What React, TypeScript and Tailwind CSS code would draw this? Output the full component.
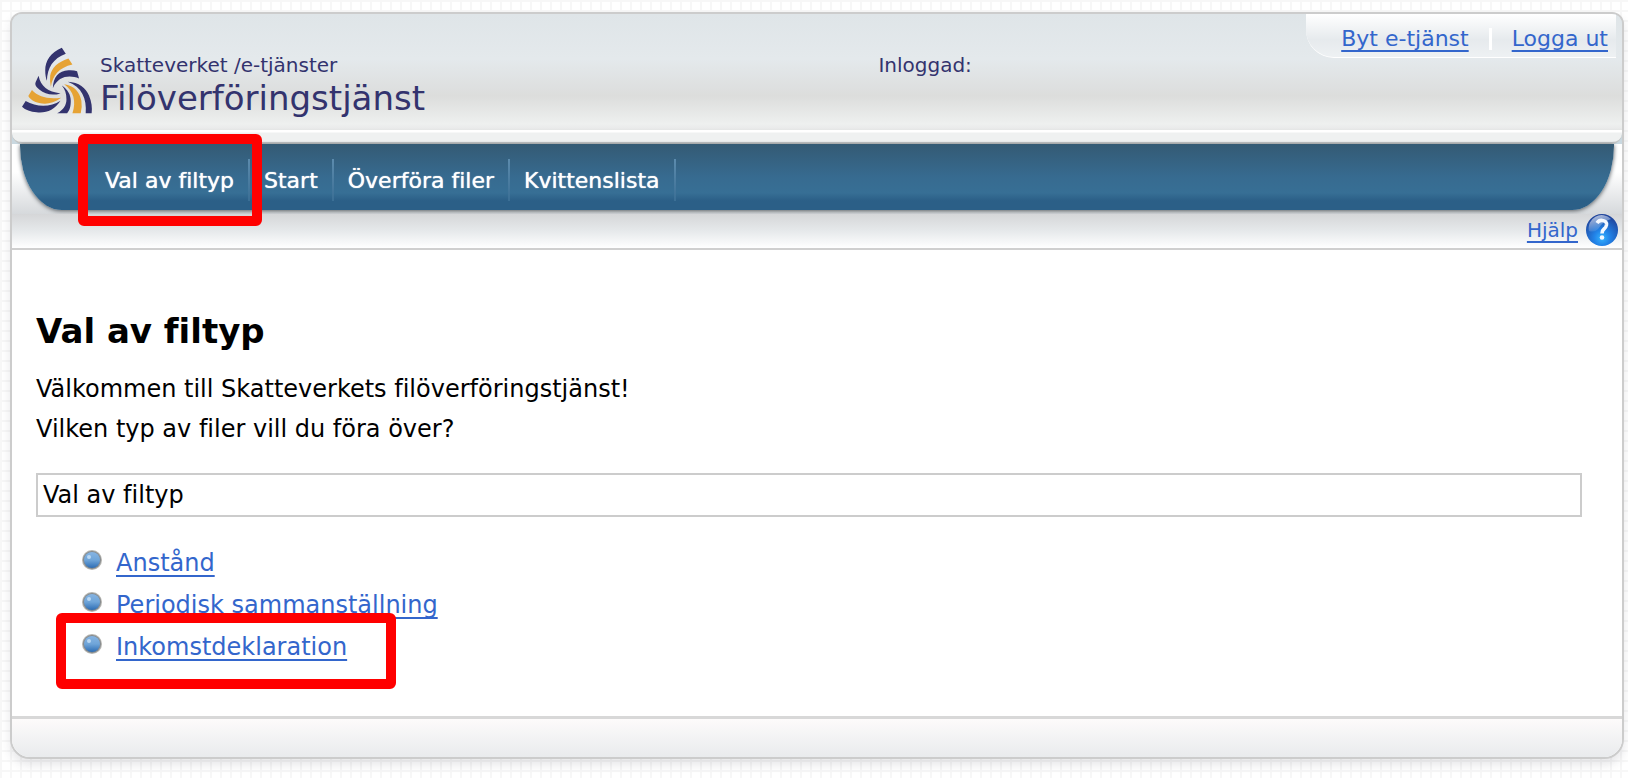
import type { ReactNode } from "react";

const linkClass =
  "text-[#3366cc] underline decoration-2 underline-offset-4 [text-decoration-skip-ink:none]";

function Logo() {
  return (
    <svg viewBox="18 22 214 202" className="h-[67px] w-[71px] shrink-0" aria-hidden="true">
      <g fill="#33336e">
        <path d="M138 24C104 38 88 64 88 92C88 106 90 116 93 124C94 84 112 56 150 42Z" />
        <path d="M111 146C112 112 128 94 158 92Q174 91 184 95L190 117C162 106 128 108 111 146Z" />
        <path d="M68 109C74 140 96 158 134 162C108 170 88 164 70 150C58 140 56 134 60 126Z" />
        <path d="M29 185C62 204 104 204 134 184C116 212 92 222 62 219C44 217 28 212 18 202Z" />
        <path d="M138 138C156 150 165 166 165 184C165 202 162 212 154 222H124C144 210 152 196 152 180C152 162 148 150 138 138Z" />
        <path d="M156 127C190 128 210 146 220 168C228 188 230 204 228 222H210C214 178 198 142 156 127Z" />
      </g>
      <g fill="#e6a334">
        <path d="M158 57C124 68 108 86 103 108Q101 126 105 142C110 108 130 84 170 75Z" />
        <path d="M48 152C68 174 98 180 136 175C112 192 92 196 70 191C54 187 44 182 37 170Z" />
        <path d="M145 134C176 138 192 158 197 184Q200 204 195 222H170C182 186 174 154 145 134Z" />
      </g>
    </svg>
  );
}

function HelpIcon() {
  return (
    <svg viewBox="0 0 32 32" className="size-8" aria-hidden="true">
      <defs>
        <radialGradient id="helpBall" cx="0.5" cy="0.75" r="0.7">
          <stop offset="0" stopColor="#35b4ff" />
          <stop offset="0.35" stopColor="#2283e8" />
          <stop offset="1" stopColor="#1f449c" />
        </radialGradient>
        <linearGradient id="helpShine" x1="0" y1="0" x2="0.4" y2="1">
          <stop offset="0" stopColor="#fff" stopOpacity="0.75" />
          <stop offset="1" stopColor="#fff" stopOpacity="0.05" />
        </linearGradient>
      </defs>
      <circle cx="16" cy="16" r="16" fill="url(#helpBall)" />
      <path d="M3 17A13 13 0 0 1 25 5Q16 8 13 14Q9 19 3 17Z" fill="url(#helpShine)" />
      <path
        d="M11 9Q13 6 16.500 6.500Q21 7 20.500 11Q20 13.500 18 15Q16 16.500 16 19.500"
        fill="none"
        stroke="#f4f8ff"
        strokeWidth="3.600"
      />
      <circle cx="16" cy="23.500" r="2.300" fill="#f4f8ff" />
    </svg>
  );
}

function Bullet() {
  return (
    <svg viewBox="0 0 20 20" className="size-5 shrink-0" aria-hidden="true">
      <defs>
        <linearGradient id="bulletFill" x1="0" y1="0" x2="0" y2="1">
          <stop offset="0" stopColor="#86b4e2" />
          <stop offset="0.5" stopColor="#6fa5d9" />
          <stop offset="1" stopColor="#2d6db4" />
        </linearGradient>
      </defs>
      <circle cx="10" cy="10" r="10" fill="#b4b4b0" />
      <circle cx="10" cy="10" r="9" fill="#85898c" />
      <circle cx="10" cy="10" r="8" fill="url(#bulletFill)" />
      <circle cx="7" cy="7" r="2" fill="#b9d7f3" />
    </svg>
  );
}

function Highlight({ className }: { className: string }) {
  return (
    <span
      className={`pointer-events-none absolute z-10 rounded-[6px] border-10 border-[#ff0000] ${className}`}
    />
  );
}

function NavItem({ children, marked }: { children: ReactNode; marked?: boolean }) {
  return (
    <li className="relative flex h-[42px] items-center">
      <a href="#" className="px-[14px] pt-[2px] [text-shadow:0_0_1px_#fff]">
        {children}
      </a>
      <span className="h-full w-[2px] bg-linear-to-b from-[#5c8bad] to-[#3b6f95]" />
      {marked && <Highlight className="-top-[25px] -right-3 -bottom-[25px] -left-[13px]" />}
    </li>
  );
}

function FileTypeItem({ children, marked }: { children: ReactNode; marked?: boolean }) {
  return (
    <li className="relative flex h-[42px] items-start gap-[14px]">
      <Bullet />
      <a href="#" className={`${linkClass} leading-[26px]`}>
        {children}
      </a>
      {marked && <Highlight className="-top-[21px] -right-[49px] h-[76px] -left-[26px]" />}
    </li>
  );
}

export default function App() {
  return (
    <div className="min-h-screen bg-white bg-[linear-gradient(#f7f7f7_2px,transparent_2px),linear-gradient(90deg,#f7f7f7_2px,transparent_2px)] bg-size-[10px_10px] pt-3 pr-1 pb-[18px] pl-[10px] font-['Verdana','DejaVu_Sans',sans-serif] text-2xl text-black [font-variant-ligatures:none]">
      <div className="overflow-hidden rounded-t-[12px] rounded-b-[20px] border-2 border-[#cccccc] bg-white shadow-[0_6px_10px_rgba(60,60,70,0.12)]">
        <div className="bg-[#c9d8e0]">
          <header className="flex h-[130px] justify-between rounded-b-[10px] border-b-2 border-[#c4c6c6] bg-[linear-gradient(#dfe5e8,#e4e9ec_45px,#dcdddc_82px,#eef0ef_110px,#eaebeb_114px,#e4e6e5_116px,#fff_116px,#fff_118px,#eff1f1_119px)] text-[#33336e]">
            <div className="flex w-[54%] gap-[7px] pt-[33px] pl-[10px]">
              <Logo />
              <div className="pt-[6px]">
                <p className="text-xl leading-6">Skatteverket /e-tjänster</p>
                <h2 className="text-[34px] leading-[42px]">Filöverföringstjänst</h2>
              </div>
            </div>
            <p className="-ml-[3px] grow pt-[39px] text-xl leading-6">Inloggad:</p>
            <div className="mr-[6px] flex h-[44px] items-center rounded-bl-[28px] border-b border-white bg-linear-to-b from-white via-[#e6eaed] via-60% to-[#eef1f3] pt-[6px] pr-2 pl-[35px] text-[22px]">
              <a href="#" className={linkClass}>
                Byt e-tjänst
              </a>
              <span className="mx-5 h-[22px] w-[3px] bg-white" />
              <a href="#" className={linkClass}>
                Logga ut
              </a>
            </div>
          </header>
        </div>
        <div className="bg-linear-to-b from-white via-white via-40% to-[#d6d9dc] px-2 pb-1">
          <nav className="h-[66px] rounded-b-[42px_64px] bg-[linear-gradient(#345a74,#376b90_50%,#376f95_74%,#2b5f87_86%,#2b5f87)] shadow-[0_1px_4px_#555b60]">
            <ul className="flex pt-[15px] pl-[71px] text-[22px] text-white">
              <NavItem marked>Val av filtyp</NavItem>
              <NavItem>Start</NavItem>
              <NavItem>Överföra filer</NavItem>
              <NavItem>Kvittenslista</NavItem>
            </ul>
          </nav>
        </div>
        <div className="flex h-[36px] items-start justify-end border-b-2 border-[#cfcfcf] bg-linear-to-b from-[#d5d6d8] via-[#e6e9eb] to-white pr-1 text-xl">
          <a href="#" className="flex items-center gap-2">
            <span className={linkClass}>Hjälp</span>
            <HelpIcon />
          </a>
        </div>
        <main className="px-6 pt-[59px] pb-[40px]">
          <h1 className="text-[34px] leading-[44px] font-bold">Val av filtyp</h1>
          <p className="pt-4 leading-10">Välkommen till Skatteverkets filöverföringstjänst!</p>
          <p className="leading-10">Vilken typ av filer vill du föra över?</p>
          <div className="mt-[24px] mr-4 border-2 border-[#cccccc] px-[5px] leading-10">
            Val av filtyp
          </div>
          <ul className="flex flex-col items-start pt-[33px] pl-[46px]">
            <FileTypeItem>Anstånd</FileTypeItem>
            <FileTypeItem>Periodisk sammanställning</FileTypeItem>
            <FileTypeItem marked>Inkomstdeklaration</FileTypeItem>
          </ul>
        </main>
        <footer className="h-[41px] border-t-3 border-[#d8d8d8] bg-linear-to-b from-[#fdfbfb] to-[#e9ebed]" />
      </div>
    </div>
  );
}
